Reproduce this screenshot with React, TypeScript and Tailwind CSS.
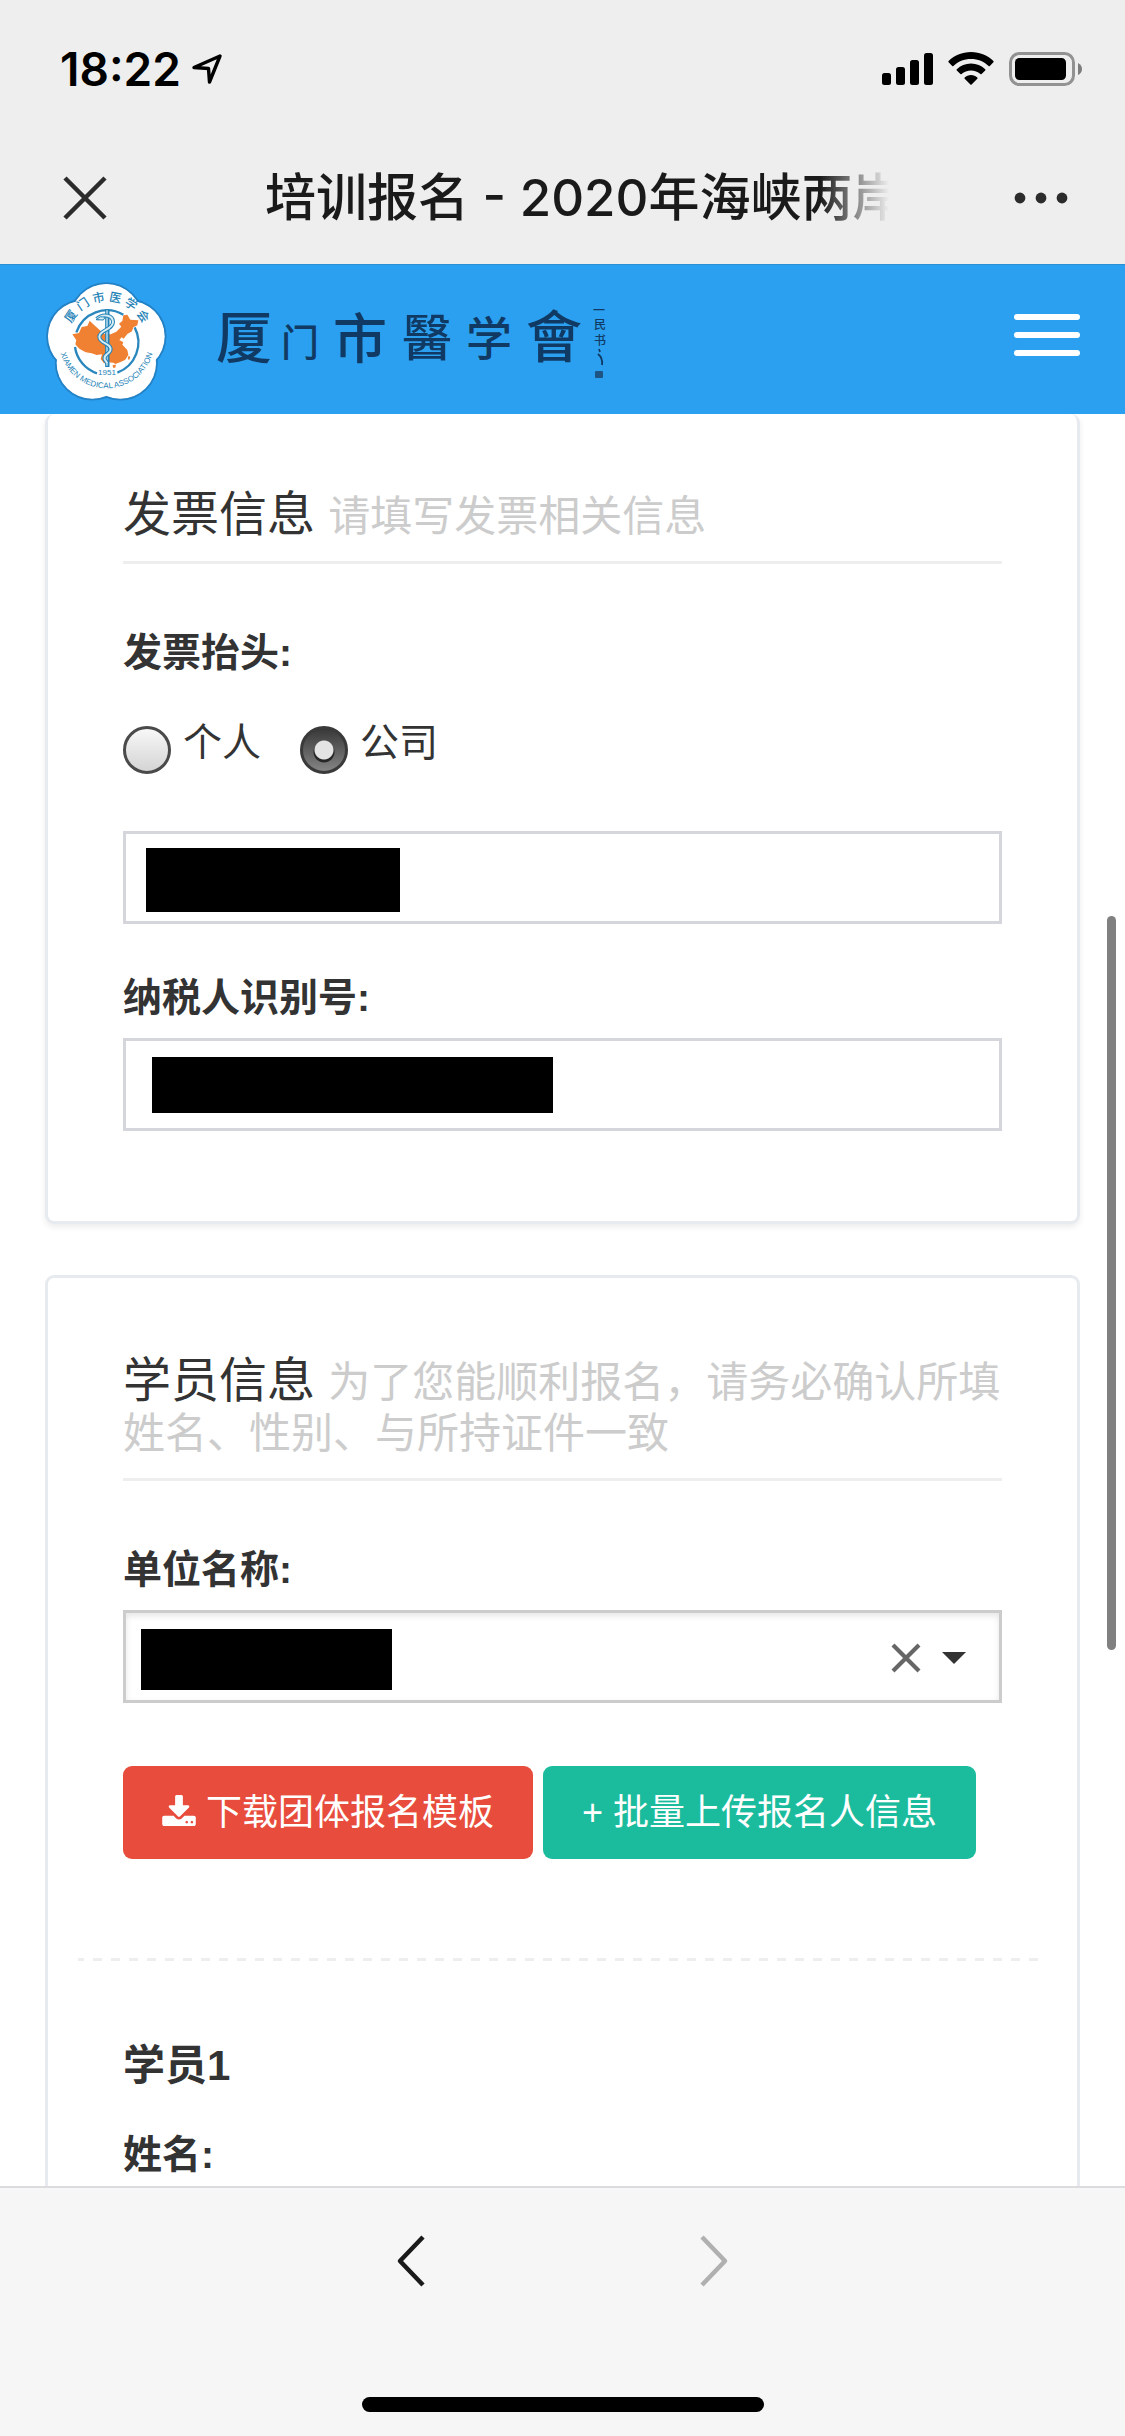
import { useState } from "react";
import type { ReactNode } from "react";

const inputBox =
  "block h-[93px] w-full rounded-none border-[3px] border-[#d4d6dc] bg-white px-9 text-[39px] outline-none";

function StatusBar() {
  return (
    <div className="flex h-[138px] items-center justify-between pr-[43px] pl-[60px] text-black">
      <div className="flex items-center gap-[10px]">
        <span className="text-[46px] leading-[60px] font-semibold">18:22</span>
        <svg className="h-[32px] w-[32px]" viewBox="0 0 32 32" fill="none" stroke="#000" strokeWidth="3.4" strokeLinejoin="round">
          <path d="M29 3L3 14.5L17.500 15.5L18.5 29Z" />
        </svg>
      </div>
      <div className="flex items-center gap-[15px]">
        <svg className="h-[34px] w-[51px]" viewBox="0 0 51 34">
          <rect x="0" y="21" width="9" height="12" rx="2.5" />
          <rect x="14" y="15" width="9" height="18" rx="2.5" />
          <rect x="28" y="8" width="9" height="25" rx="2.5" />
          <rect x="42" y="1" width="9" height="32" rx="2.5" />
        </svg>
        <svg className="h-[34px] w-[46px]" viewBox="0 0 46 34">
          <path d="M23 0C14 0 6 3.500 .6 9Q0 9.700 .6 10.300L4.200 14Q4.800 14.500 5.400 14C10 9.500 16 7 23 7S36 9.500 40.600 14Q41.200 14.500 41.800 14L45.400 10.300Q46 9.700 45.400 9C40 3.500 32 0 23 0Z" />
          <path d="M23 11.500C17.500 11.500 12.500 13.700 8.800 17.200Q8.200 17.800 8.800 18.400L12.400 22Q13 22.600 13.600 22C16.200 19.800 19.400 18.400 23 18.400S29.800 19.800 32.400 22Q33 22.600 33.600 22L37.200 18.400Q37.800 17.800 37.200 17.200C33.500 13.700 28.500 11.500 23 11.500Z" />
          <path d="M23 23C20.500 23 18.300 23.900 16.700 25.400Q16 26 16.700 26.700L22.400 32.500Q23 33.100 23.600 32.500L29.300 26.700Q30 26 29.300 25.400C27.700 23.900 25.500 23 23 23Z" />
        </svg>
        <svg className="h-[34px] w-[73px]" viewBox="0 0 73 34">
          <rect x="1.500" y="1.500" width="63" height="31" rx="9" fill="none" stroke="#929292" strokeWidth="3" />
          <rect x="6" y="6" width="51" height="22" rx="4.500" />
          <path d="M69 11V23Q73 21 73 17T69 11Z" fill="#7d7d7d" />
        </svg>
      </div>
    </div>
  );
}

function TitleBar() {
  return (
    <div className="flex h-[120px] items-center pr-[52px] pl-[60px]">
      <button type="button" aria-label="关闭" className="flex h-[50px] w-[50px] items-center justify-center">
        <svg className="h-[46px] w-[46px]" viewBox="0 0 46 46" stroke="#2b2b2b" strokeWidth="4.500">
          <path d="M3 3L43 43M43 3L3 43" />
        </svg>
      </button>
      <h1 className="ml-[155px] min-w-0 flex-1 overflow-hidden [mask-image:linear-gradient(to_right,black_89%,transparent)] text-[51px] leading-[68px] font-medium whitespace-nowrap text-[#1a1a1a]">
        培训报名 - 2020年海峡两岸
      </h1>
      <button type="button" aria-label="更多" className="ml-[120px] flex h-[50px] w-[64px] items-center justify-center">
        <svg className="h-[12px] w-[54px]" viewBox="0 0 54 12" fill="#2b2b2b">
          <circle cx="6" cy="6" r="5.400" />
          <circle cx="27" cy="6" r="5.400" />
          <circle cx="48" cy="6" r="5.400" />
        </svg>
      </button>
    </div>
  );
}

function Emblem() {
  return (
    <svg className="h-[130px] w-[135px] shrink-0" viewBox="0 0 405 390" role="img" aria-label="厦门市医学会徽标">
      <defs>
        <path id="arc-top" d="M84 181A118 118 0 0 1 318 181" />
        <path id="arc-bottom" d="M58 214A143 143 0 0 0 342 214" />
      </defs>
      <g fill="#fff" stroke="#2382c6" strokeWidth="7">
        <circle cx="199" cy="134" r="109" />
        <circle cx="267" cy="184" r="109" />
        <circle cx="241" cy="264" r="109" />
        <circle cx="157" cy="264" r="109" />
        <circle cx="131" cy="184" r="109" />
      </g>
      <g fill="#fff">
        <circle cx="199" cy="134" r="107" />
        <circle cx="267" cy="184" r="107" />
        <circle cx="241" cy="264" r="107" />
        <circle cx="157" cy="264" r="107" />
        <circle cx="131" cy="184" r="107" />
      </g>
      <g fill="none" stroke="#2a87bd" strokeWidth="7">
        <path d="M109 172A97 97 0 0 1 250 119" />
        <path d="M284 157A97 97 0 0 1 232 293" />
        <path d="M171 295A97 97 0 0 1 105 216" />
      </g>
      <path
        fill="#f08032"
        d="M97 178L117 174L125 156L142 153L149 137L160 148L178 164L194 177L212 178L229 170L244 155L237 146L247 138L250 121L262 119L271 134L295 136L292 151L280 157L276 169L262 177L251 191L245 187L238 195L250 202L247 209L262 225L265 240L255 255L240 262L226 267L220 263L205 262L192 265L182 252L186 238L170 240L155 235L137 232L118 221L106 208L109 196Z"
      />
      <path fill="#f08032" d="M266 242L271 246L267 256L263 250ZM218 270L228 269L226 278L219 278Z" />
      <path d="M202 103V276" stroke="#2382b6" strokeWidth="13" />
      <path d="M201 106V272" stroke="#a9d5e7" strokeWidth="5" />
      <path
        d="M170 132C192 112 219 123 219 141C219 164 178 165 178 185C178 207 218 205 211 227C205 240 190 238 194 253L202 265"
        fill="none"
        stroke="#2382b6"
        strokeWidth="12"
      />
      <path
        d="M170 132C192 112 219 123 219 141C219 164 178 165 178 185C178 207 218 205 211 227C205 240 190 238 194 253L202 265"
        fill="none"
        stroke="#d7edf4"
        strokeWidth="6"
      />
      <path d="M168 134Q180 121 196 126L190 135Z" fill="#d7edf4" stroke="#2382b6" strokeWidth="3" />
      <g fill="#2382b6">
        <text className="text-[36px] font-medium" textAnchor="middle">
          <textPath href="#arc-top" startOffset="50%">
            厦 门 市 医 学 会
          </textPath>
        </text>
        <text className="text-[24px]" textAnchor="middle">
          <textPath href="#arc-bottom" startOffset="50%">
            XIAMEN MEDICAL ASSOCIATION
          </textPath>
        </text>
        <text x="201" y="300" className="text-[24px] font-medium" textAnchor="middle">
          1951
        </text>
      </g>
    </svg>
  );
}

function SiteHeader() {
  return (
    <header className="flex h-[150px] items-center border-t border-[#2b8fd2] bg-[#2ba0f0] pr-[45px] pl-[40px]">
      <Emblem />
      <svg className="ml-[25px] h-[110px] w-[440px]" viewBox="0 0 440 110" role="img" aria-label="厦门市醫学會">
        <g fill="#103a63" textAnchor="middle" className="font-medium">
          <text x="44" y="73" className="text-[56px]">厦</text>
          <text x="100" y="71" className="text-[38px]">门</text>
          <text x="160" y="74" className="text-[54px]">市</text>
          <text x="227" y="71" className="text-[50px]">醫</text>
          <text x="289" y="70" className="text-[46px]">学</text>
          <text x="354" y="72" className="text-[56px]">會</text>
          <text x="399" y="30" className="text-[12px]">一</text>
          <text x="400" y="44" className="text-[12px]">民</text>
          <text x="400" y="60" className="text-[12px]">书</text>
        </g>
        <path d="M399 64L400 67M398 69Q403 73 402 80" fill="none" stroke="#103a63" strokeWidth="1.800" />
        <rect x="395" y="86" width="8" height="7" rx="1" fill="#1d5483" />
      </svg>
      <button type="button" aria-label="菜单" className="mb-[9px] ml-auto flex w-[66px] flex-col gap-[12px]">
        <span className="h-[6px] rounded-full bg-white" />
        <span className="h-[6px] rounded-full bg-white" />
        <span className="h-[6px] rounded-full bg-white" />
      </button>
    </header>
  );
}

function SectionHeading({ title, note }: { title: string; note: string }) {
  return (
    <h2 className="mb-[61px] border-b-[3px] border-[#eeeeee] pb-[21px] text-[48px] leading-[51px] font-normal text-[#333]">
      {title} <small className="text-[42px] leading-none text-[#cccccc]">{note}</small>
    </h2>
  );
}

function FieldLabel({ htmlFor, children }: { htmlFor?: string; children: ReactNode }) {
  return (
    <label htmlFor={htmlFor} className="block pb-3 text-[39px] leading-[56px] font-bold">
      {children}
    </label>
  );
}

function Radio({ label, checked, onChange }: { label: string; checked: boolean; onChange: () => void }) {
  return (
    <label className="flex items-start gap-3 text-[39px] leading-[60px]">
      <input
        type="radio"
        name="invoice-title"
        checked={checked}
        onChange={onChange}
        className="mt-[13px] h-12 w-12 appearance-none rounded-full border-[3px] border-[#4a4a4a] bg-linear-to-b from-[#fafafa] to-[#d2d2d2] bg-origin-border checked:border-[#3a3a3a] checked:bg-[radial-gradient(circle_at_50%_50%,#e4e4e4_9px,transparent_10px),radial-gradient(circle_at_50%_54%,#262626_10px,transparent_11px),linear-gradient(#333,#8a8a8a)]"
      />
      {label}
    </label>
  );
}

function InvoiceCard() {
  const [kind, setKind] = useState("公司");
  return (
    <section className="rounded-[9px] border-[3px] border-t-0 border-[#e7ebef] bg-white px-[75px] pt-[75px] pb-[90px] shadow-[0_3px_6px_rgba(0,0,0,0.08)]">
      <SectionHeading title="发票信息" note="请填写发票相关信息" />
      <FieldLabel htmlFor="invoice-name">发票抬头:</FieldLabel>
      <div role="radiogroup" aria-label="发票抬头" className="mt-[20px] mb-[58px] flex h-[60px] gap-[39px]">
        <Radio label="个人" checked={kind === "个人"} onChange={() => setKind("个人")} />
        <Radio label="公司" checked={kind === "公司"} onChange={() => setKind("公司")} />
      </div>
      <div className="relative">
        <input id="invoice-name" type="text" className={inputBox} />
        <span className="absolute top-[17px] left-[23px] h-[64px] w-[254px] bg-black" />
      </div>
      <div className="mt-[46px]">
        <FieldLabel htmlFor="tax-id">纳税人识别号:</FieldLabel>
        <div className="relative">
          <input id="tax-id" type="text" className={inputBox} />
          <span className="absolute top-[19px] left-[29px] h-[56px] w-[401px] bg-black" />
        </div>
      </div>
    </section>
  );
}

function StudentCard() {
  return (
    <section className="mt-[51px] rounded-[9px] border-[3px] border-[#e7ebef] bg-white px-[75px] pt-[77px] pb-[90px]">
      <SectionHeading title="学员信息" note="为了您能顺利报名，请务必确认所填姓名、性别、与所持证件一致" />
      <FieldLabel htmlFor="organization">单位名称:</FieldLabel>
      <div className="relative">
        <select
          id="organization"
          className="block h-[93px] w-full appearance-none border-[3px] border-[#cccccc] bg-white px-6 text-[39px] shadow-[inset_0_3px_6px_rgba(0,0,0,0.1)] outline-none"
        >
          <option />
        </select>
        <span className="absolute top-[19px] left-[18px] h-[61px] w-[251px] bg-black" />
        <div className="pointer-events-none absolute inset-y-0 right-[36px] flex items-center gap-[21px] pt-[3px]">
          <button type="button" aria-label="清除" className="pointer-events-auto">
            <svg className="h-[30px] w-[30px]" viewBox="0 0 30 30" stroke="#666" strokeWidth="4.200">
              <path d="M2 2L28 28M28 2L2 28" />
            </svg>
          </button>
          <svg className="h-[12px] w-[24px]" viewBox="0 0 24 12" fill="#333">
            <path d="M0 0H24L12 12Z" />
          </svg>
        </div>
      </div>
      <div className="mt-[63px] flex gap-[10px] text-[36px] leading-[54px] text-white">
        <button type="button" className="flex h-[93px] items-center gap-[10px] rounded-[9px] bg-[#e84c3d] px-[39px] whitespace-nowrap">
          <svg className="mb-[4px] h-[31px] w-[34px]" viewBox="0 0 1664 1536" fill="currentColor">
            <path d="M1280 1344q0-26-19-45t-45-19-45 19-19 45 19 45 45 19 45-19 19-45zm256 0q0-26-19-45t-45-19-45 19-19 45 19 45 45 19 45-19 19-45zm128-224v320q0 40-28 68t-68 28h-1472q-40 0-68-28t-28-68v-320q0-40 28-68t68-28h465l135 136q58 56 136 56t136-56l136-136h464q40 0 68 28t28 68zm-325-569q17 41-14 70l-448 448q-18 19-45 19t-45-19l-448-448q-31-29-14-70 17-39 59-39h256v-448q0-26 19-45t45-19h256q26 0 45 19t19 45v448h256q42 0 59 39z" />
          </svg>
          下载团体报名模板
        </button>
        <button type="button" className="h-[93px] rounded-[9px] bg-[#1bbc9d] px-[39px] whitespace-nowrap">
          + 批量上传报名人信息
        </button>
      </div>
      <hr className="-mx-[45px] mt-[99px] h-[3px] border-0 bg-[repeating-linear-gradient(to_right,#eeeeee_0_6px,transparent_6px_15px,#eeeeee_15px_18px)]" />
      <h3 className="mt-[78px] mb-[34px] text-[42px] leading-[54px] font-bold">学员1</h3>
      <FieldLabel htmlFor="student-name">姓名:</FieldLabel>
      <input id="student-name" type="text" className={inputBox} />
    </section>
  );
}

function BottomBar() {
  return (
    <footer className="flex h-[250px] shrink-0 flex-col items-center justify-between border-t-2 border-[#dcdbdd] bg-[#f7f6f7] pt-[46px] pb-[24px]">
      <nav className="flex gap-[238px]">
        <button type="button" aria-label="后退" className="flex h-[54px] w-[65px] items-center justify-center">
          <svg className="h-[54px] w-[30px]" viewBox="0 0 30 54" fill="none" stroke="#1a1a1a" strokeWidth="4.500" strokeLinejoin="round">
            <path d="M27 3L4 27L27 51" />
          </svg>
        </button>
        <button type="button" aria-label="前进" className="flex h-[54px] w-[65px] items-center justify-center">
          <svg className="h-[54px] w-[30px]" viewBox="0 0 30 54" fill="none" stroke="#b0b0b0" strokeWidth="4.500" strokeLinejoin="round">
            <path d="M3 3L26 27L3 51" />
          </svg>
        </button>
      </nav>
      <div className="h-[15px] w-[402px] rounded-full bg-black" />
    </footer>
  );
}

export default function App() {
  return (
    <div className="flex h-screen flex-col overflow-hidden bg-white text-[#333] [font-family:'Liberation_Sans','Noto_Sans_CJK_SC',sans-serif]">
      <div className="shrink-0 bg-[#eeeeee] pb-[6px] [font-family:Inter,'Noto_Sans_CJK_SC',sans-serif]">
        <StatusBar />
        <TitleBar />
      </div>
      <div className="shrink-0">
        <SiteHeader />
      </div>
      <main className="relative min-h-0 flex-1 overflow-hidden px-[45px]">
        <InvoiceCard />
        <StudentCard />
        <div className="absolute top-[502px] right-[9px] h-[734px] w-[9px] rounded-full bg-[#808080]" />
      </main>
      <BottomBar />
    </div>
  );
}
